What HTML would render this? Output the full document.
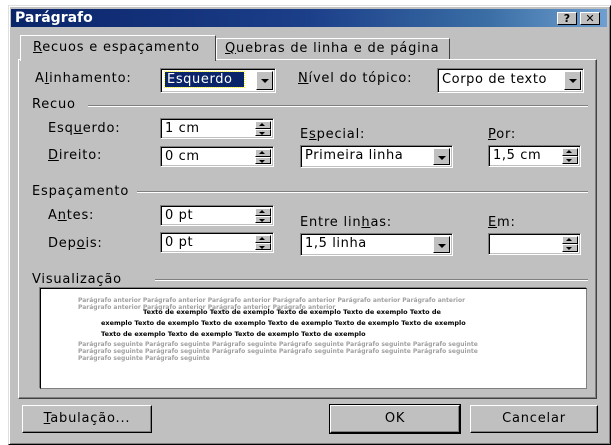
<!DOCTYPE html>
<html><head><meta charset="utf-8"><style>
*{box-sizing:border-box;margin:0;padding:0}
body{width:611px;height:441px;background:#fff;position:relative;overflow:hidden;font-family:"DejaVu Sans","Liberation Sans",sans-serif;font-size:13px;color:#000}
.a{position:absolute;white-space:nowrap}
.dlg{left:8px;top:5px;width:603px;height:440px;background:#c0c0c0;border:1px solid #dfdfdf;border-right-color:#000;border-bottom-color:#000;box-shadow:inset 1px 1px #fff,inset -1px -1px #808080}
.title{left:11px;top:9px;width:596px;height:18px;background:linear-gradient(90deg,#0a246a,#1c3f8a 50%,#3a6ea5 80%,#6f9fd0);color:#fff;font-weight:bold;font-size:14px;line-height:18px;padding-left:4px}
.tb{top:12px;width:20px;height:13px;background:#c0c0c0;border:1px solid #fff;border-right-color:#000;border-bottom-color:#000;font-weight:bold;font-size:11px;line-height:11px;text-align:center;color:#000}
.panel{left:18px;top:59px;width:579px;height:340px;border:1px solid #fff;border-right-color:#404040;border-bottom-color:#404040;box-shadow:inset -1px -1px #808080}
.tab{border:1px solid #fff;border-bottom:none;border-right-color:#404040;background:#c0c0c0;padding-left:10px;line-height:20px;font-size:13px;letter-spacing:.8px}
.in{background:#fff;border:1px solid #808080;border-right-color:#fff;border-bottom-color:#fff;box-shadow:inset 1px 1px #000,inset -1px -1px #c0c0c0;padding-left:4px;line-height:19px;font-size:13px;letter-spacing:.6px}
.dd{position:absolute;right:2px;top:2px;bottom:2px;width:17px;background:#c0c0c0;border:1px solid #fff;border-right-color:#000;border-bottom-color:#000}
.dd:after{content:"";position:absolute;left:4px;top:7px;border:4px solid transparent;border-top:4px solid #000;border-bottom:0}
.sp{position:absolute;right:2px;top:2px;bottom:2px;width:16px}
.sp i{display:block;height:50%;background:#c0c0c0;border:1px solid #fff;border-right-color:#000;border-bottom-color:#000;position:relative}
.sp i.u:after,.sp i.d:after{content:"";position:absolute;left:3px;border:3px solid transparent}
.sp i.u:after{top:1px;border-bottom:3px solid #000;border-top:0}
.sp i.d:after{top:2px;border-top:3px solid #000;border-bottom:0}
.lbl{font-size:13px;line-height:16px;letter-spacing:.8px}
.grp{height:2px;border-top:1px solid #808080;border-bottom:1px solid #fff}
.btn{background:#c0c0c0;border:1px solid #fff;border-right-color:#000;border-bottom-color:#000;box-shadow:inset -1px -1px #808080;text-align:center;line-height:26px;font-size:13px;letter-spacing:.8px}
u{text-decoration:underline}
.pv{font-size:6px;line-height:7px;color:#a0a0a0;white-space:normal;font-weight:bold}
.pk{font-size:6.5px;line-height:11px;color:#000;font-weight:bold;white-space:normal}
</style></head><body>
<div class="a dlg"></div>
<div class="a title">Parágrafo</div>
<div class="a tb" style="left:557px">?</div>
<div class="a tb" style="left:580px">✕</div>

<div class="a panel"></div>
<div class="a tab" style="left:216px;top:38px;width:234px;height:21px;padding-left:8px"><u>Q</u>uebras de linha e de página</div>
<div class="a tab" style="left:20px;top:35px;width:196px;height:26px;line-height:24px;border-right:1px solid #404040;padding-left:12px"><u>R</u>ecuos e espaçamento</div>

<div class="a lbl" style="left:35px;top:71px">A<u>l</u>inhamento:</div>
<div class="a in" style="left:160px;top:68px;width:116px;height:25px;line-height:21px"><span style="background:#0a246a;color:#fff;outline:1px dotted #ff0;padding:0 2px">Esquerdo&nbsp;&nbsp;</span><div class="dd"></div></div>
<div class="a lbl" style="left:298px;top:71px"><u>N</u>ível do tópico:</div>
<div class="a in" style="left:437px;top:68px;width:147px;height:25px;line-height:21px">Corpo de texto<div class="dd"></div></div>

<div class="a lbl" style="left:32px;top:97px">Recuo</div>
<div class="a grp" style="left:88px;top:105px;width:500px"></div>
<div class="a lbl" style="left:48px;top:121px">Esq<u>u</u>erdo:</div>
<div class="a in" style="left:160px;top:118px;width:114px;height:21px">1 cm<div class="sp"><i class="u"></i><i class="d"></i></div></div>
<div class="a lbl" style="left:48px;top:148px"><u>D</u>ireito:</div>
<div class="a in" style="left:160px;top:146px;width:114px;height:21px">0 cm<div class="sp"><i class="u"></i><i class="d"></i></div></div>
<div class="a lbl" style="left:300px;top:127px">E<u>s</u>pecial:</div>
<div class="a in" style="left:300px;top:145px;width:153px;height:23px">Primeira linha<div class="dd"></div></div>
<div class="a lbl" style="left:488px;top:127px"><u>P</u>or:</div>
<div class="a in" style="left:488px;top:145px;width:93px;height:22px">1,5 cm<div class="sp"><i class="u"></i><i class="d"></i></div></div>

<div class="a lbl" style="left:32px;top:184px">Espaçamento</div>
<div class="a grp" style="left:137px;top:191px;width:451px"></div>
<div class="a lbl" style="left:48px;top:208px">A<u>n</u>tes:</div>
<div class="a in" style="left:160px;top:205px;width:114px;height:21px">0 pt<div class="sp"><i class="u"></i><i class="d"></i></div></div>
<div class="a lbl" style="left:48px;top:236px">Dep<u>o</u>is:</div>
<div class="a in" style="left:160px;top:232px;width:114px;height:21px">0 pt<div class="sp"><i class="u"></i><i class="d"></i></div></div>
<div class="a lbl" style="left:300px;top:215px">Entre lin<u>h</u>as:</div>
<div class="a in" style="left:300px;top:233px;width:153px;height:23px">1,5 linha<div class="dd"></div></div>
<div class="a lbl" style="left:488px;top:215px"><u>E</u>m:</div>
<div class="a in" style="left:488px;top:233px;width:93px;height:22px"><div class="sp"><i class="u"></i><i class="d"></i></div></div>

<div class="a lbl" style="left:32px;top:272px">Visualização</div>
<div class="a grp" style="left:155px;top:279px;width:433px"></div>
<div class="a" style="left:40px;top:288px;width:547px;height:101px;background:#fff;border:1px solid #000;border-right-color:#808080;border-bottom-color:#808080;box-shadow:-1px -1px #808080"></div>
<div class="a pv" style="left:78px;top:297px;width:405px">Parágrafo anterior Parágrafo anterior Parágrafo anterior Parágrafo anterior Parágrafo anterior Parágrafo anterior Parágrafo anterior Parágrafo anterior Parágrafo anterior Parágrafo anterior</div>
<div class="a pk" style="left:101px;top:307px;width:370px;text-indent:42px">Texto de exemplo Texto de exemplo Texto de exemplo Texto de exemplo Texto de exemplo Texto de exemplo Texto de exemplo Texto de exemplo Texto de exemplo Texto de exemplo Texto de exemplo Texto de exemplo Texto de exemplo Texto de exemplo</div>
<div class="a pv" style="left:78px;top:341px;width:410px">Parágrafo seguinte Parágrafo seguinte Parágrafo seguinte Parágrafo seguinte Parágrafo seguinte Parágrafo seguinte Parágrafo seguinte Parágrafo seguinte Parágrafo seguinte Parágrafo seguinte Parágrafo seguinte Parágrafo seguinte Parágrafo seguinte Parágrafo seguinte</div>

<div class="a btn" style="left:22px;top:405px;width:130px;height:28px"><u>T</u>abulação...</div>
<div class="a btn" style="left:330px;top:405px;width:130px;height:28px;outline:1px solid #000">OK</div>
<div class="a btn" style="left:470px;top:405px;width:128px;height:28px">Cancelar</div>
</body></html>
